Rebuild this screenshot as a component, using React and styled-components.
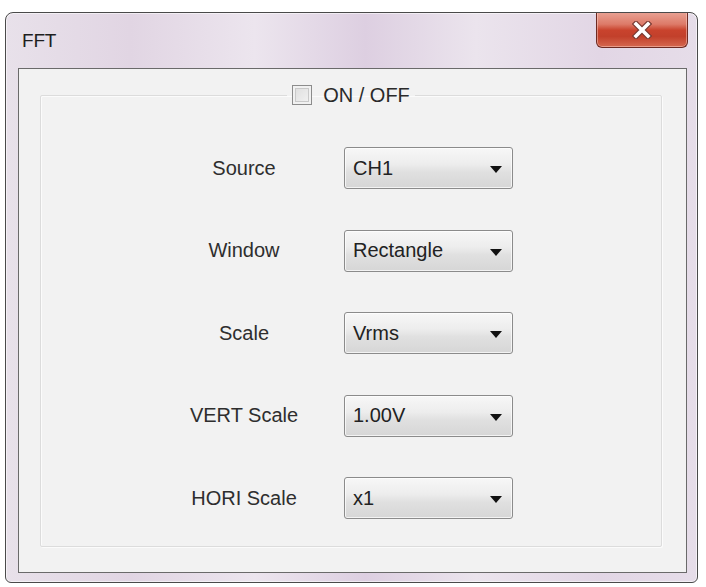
import React from "react";
import styled, { createGlobalStyle } from "styled-components";

const Global = createGlobalStyle`
  html, body { margin: 0; padding: 0; background: #ffffff; }
  body { font-family: "Liberation Sans", Arial, sans-serif; }
  * { box-sizing: border-box; }
`;

const Page = styled.div`
  width: 706px;
  height: 587px;
  padding: 12px 8px 4px 5px;
`;

const Window = styled.div`
  width: 693px;
  height: 571px;
  display: flex;
  flex-direction: column;
  border: 1px solid #4a4a4a;
  border-radius: 8px 8px 6px 6px;
  background: linear-gradient(
    90deg,
    #e8e1ea 0%,
    #e1d5e3 18%,
    #ece5ee 36%,
    #ddcfe1 52%,
    #ebe4ed 68%,
    #e2d6e5 86%,
    #e6dde9 100%
  );
  box-shadow: inset 0 0 0 1px rgba(255, 255, 255, 0.55);
  padding: 0 10px 9px 12px;
  overflow: hidden;
`;

const TitleBar = styled.div`
  height: 55px;
  flex: none;
  display: flex;
  align-items: center;
  justify-content: space-between;
  padding-left: 4px;
  margin-right: -1px;
`;

const Title = styled.span`
  font-size: 19px;
  color: #1e1e1e;
  letter-spacing: -0.2px;
`;

const CloseButton = styled.button`
  align-self: flex-start;
  width: 92px;
  height: 36px;
  margin-top: -1px;
  display: flex;
  align-items: center;
  justify-content: center;
  padding: 0;
  border: 1px solid #6e2a22;
  border-top: none;
  border-radius: 0 0 6px 6px;
  background: linear-gradient(
    180deg,
    #e9a395 0%,
    #dd7a68 35%,
    #c9432d 52%,
    #c2402b 70%,
    #d5684f 100%
  );
  box-shadow: inset 0 0 0 1px rgba(255, 220, 210, 0.45);
  cursor: default;
`;

const Panel = styled.div`
  flex: 1;
  border: 1px solid #6a6a6a;
  background: #f2f2f2;
  padding: 15px 24px 25px 21px;
  display: flex;
`;

const Group = styled.fieldset`
  flex: 1;
  margin: 0;
  border: 1px solid #dcdcdc;
  box-shadow: inset 1px 1px 0 #fbfbfb, 1px 1px 0 #fbfbfb;
  border-radius: 2px;
  padding: 41px 0 0 0;
  min-width: 0;
`;

const Legend = styled.legend`
  margin: 0 auto;
  padding: 0 5px;
  display: flex;
  align-items: center;
  gap: 11px;
  height: 22px;
`;

const Check = styled.span`
  width: 20px;
  height: 20px;
  border: 1px solid #8c8c8c;
  background: linear-gradient(135deg, #dcdcdc 0%, #f4f4f4 100%);
  box-shadow: inset 0 0 0 2px #f1f1f1, inset 0 0 0 3px #c9c9c9;
`;

const LegendText = styled.span`
  font-size: 20px;
  color: #2a2a2a;
`;

const Form = styled.div`
  margin-left: 123px;
  display: grid;
  grid-template-columns: 160px 169px;
  column-gap: 20px;
  row-gap: 40.5px;
  grid-auto-rows: 42px;
  align-items: center;
`;

const Label = styled.span`
  text-align: center;
  font-size: 20px;
  color: #2e2e2e;
`;

const Select = styled.div`
  height: 42px;
  display: flex;
  align-items: center;
  justify-content: space-between;
  padding: 0 10px 0 8px;
  border: 1px solid #8b8b8b;
  border-radius: 3px;
  background: linear-gradient(180deg, #f7f7f7 0%, #ededed 40%, #e0e0e0 60%, #d6d6d6 100%);
  box-shadow: inset 0 0 0 1px rgba(255, 255, 255, 0.7);
  font-size: 20px;
  color: #222222;
`;

const Arrow = styled.span`
  width: 0;
  height: 0;
  margin-top: 3px;
  border-left: 6px solid transparent;
  border-right: 6px solid transparent;
  border-top: 7px solid #111111;
`;

const fields = [
  ["Source", "CH1"],
  ["Window", "Rectangle"],
  ["Scale", "Vrms"],
  ["VERT Scale", "1.00V"],
  ["HORI Scale", "x1"],
];

function CloseGlyph() {
  return (
    <svg width="22" height="18" viewBox="0 0 22 18">
      <g strokeLinecap="square">
        <path d="M5 3 L17 15 M17 3 L5 15" stroke="#7a3b33" strokeWidth="6" />
        <path d="M5 3 L17 15 M17 3 L5 15" stroke="#ffffff" strokeWidth="3.6" />
      </g>
    </svg>
  );
}

export default function App() {
  return (
    <>
      <Global />
      <Page>
        <Window>
          <TitleBar>
            <Title>FFT</Title>
            <CloseButton aria-label="Close">
              <CloseGlyph />
            </CloseButton>
          </TitleBar>
          <Panel>
            <Group>
              <Legend>
                <Check />
                <LegendText>ON / OFF</LegendText>
              </Legend>
              <Form>
                {fields.map(([label, value]) => (
                  <React.Fragment key={label}>
                    <Label>{label}</Label>
                    <Select>
                      <span>{value}</span>
                      <Arrow />
                    </Select>
                  </React.Fragment>
                ))}
              </Form>
            </Group>
          </Panel>
        </Window>
      </Page>
    </>
  );
}
